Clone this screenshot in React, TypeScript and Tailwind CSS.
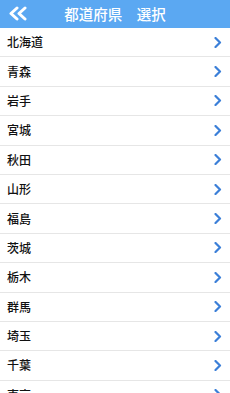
import React from 'react';

const prefectures = [
  '北海道', '青森', '岩手', '宮城', '秋田', '山形', '福島',
  '茨城', '栃木', '群馬', '埼玉', '千葉', '東京', '神奈川',
];

function Chevron() {
  return (
    <svg width="8" height="11" viewBox="0 0 8 11" fill="none">
      <path d="M1.5 1 L6 5.5 L1.5 10" stroke="#3b7fd8" strokeWidth="2.2" strokeLinecap="round" strokeLinejoin="round" />
    </svg>
  );
}

export default function App() {
  return (
    <div
      className="w-[230px] h-[393px] overflow-hidden bg-white"
      style={{ fontFamily: '"Noto Sans CJK JP", "Noto Sans", sans-serif' }}
    >
      {/* Header */}
      <div className="relative h-[28px] bg-[#5ba8f2] flex items-center justify-center">
        <button className="absolute left-[7px] top-[6px]">
          <svg width="22" height="15" viewBox="0 0 22 15" fill="none">
            <path d="M10 2 L4 7.5 L10 13" stroke="white" strokeWidth="3" strokeLinecap="round" strokeLinejoin="round" />
            <path d="M18 2 L12 7.5 L18 13" stroke="white" strokeWidth="3" strokeLinecap="round" strokeLinejoin="round" />
          </svg>
        </button>
        <span className="text-white text-[14.5px] font-medium leading-none">都道府県　選択</span>
      </div>

      {/* List */}
      <ul>
        {prefectures.map((p) => (
          <li
            key={p}
            className="h-[29.4px] flex items-center justify-between pl-[7px] pr-[8px] border-b border-[#e6e6e6]"
          >
            <span className="text-[12px] font-medium text-[#111] leading-none">{p}</span>
            <Chevron />
          </li>
        ))}
      </ul>
    </div>
  );
}
